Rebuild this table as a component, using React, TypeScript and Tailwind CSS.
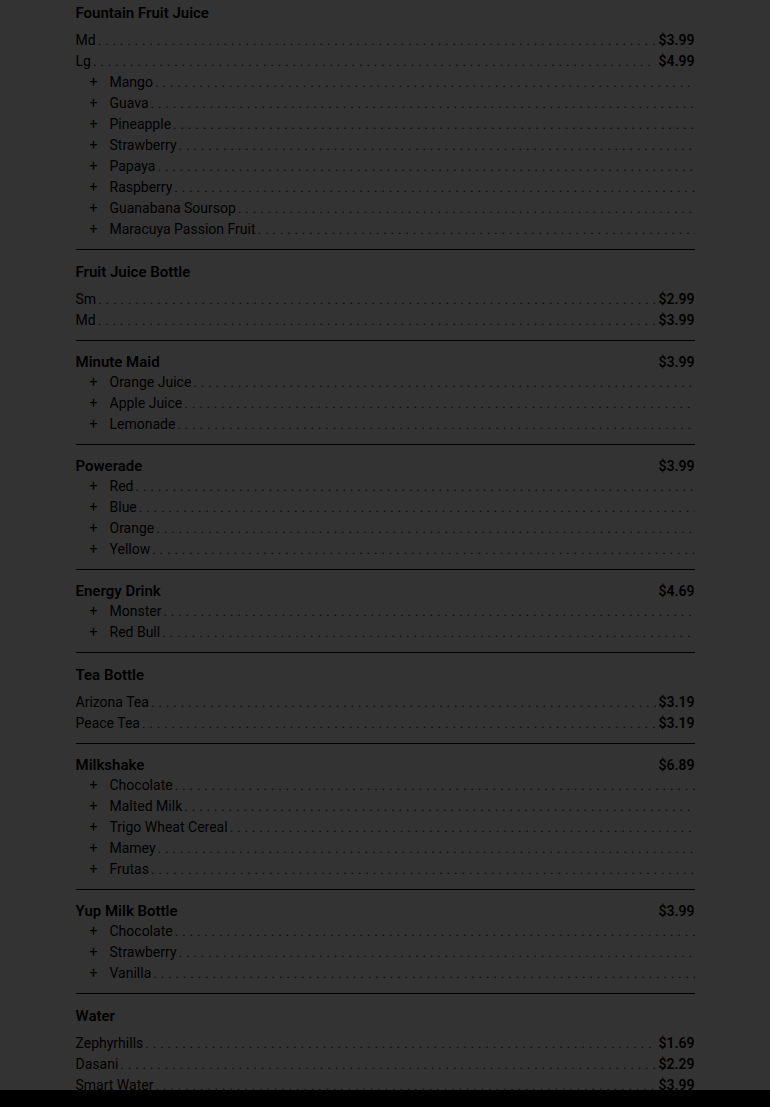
type Row = { name: string; price?: string }
type Section = { title: string; price?: string; rows?: Row[]; subs?: string[] }

const sections: Section[] = [
  {
    title: 'Fountain Fruit Juice',
    rows: [
      { name: 'Md', price: '$3.99' },
      { name: 'Lg', price: '$4.99' },
    ],
    subs: ['Mango', 'Guava', 'Pineapple', 'Strawberry', 'Papaya', 'Raspberry', 'Guanabana Soursop', 'Maracuya Passion Fruit'],
  },
  {
    title: 'Fruit Juice Bottle',
    rows: [
      { name: 'Sm', price: '$2.99' },
      { name: 'Md', price: '$3.99' },
    ],
  },
  { title: 'Minute Maid', price: '$3.99', subs: ['Orange Juice', 'Apple Juice', 'Lemonade'] },
  { title: 'Powerade', price: '$3.99', subs: ['Red', 'Blue', 'Orange', 'Yellow'] },
  { title: 'Energy Drink', price: '$4.69', subs: ['Monster', 'Red Bull'] },
  {
    title: 'Tea Bottle',
    rows: [
      { name: 'Arizona Tea', price: '$3.19' },
      { name: 'Peace Tea', price: '$3.19' },
    ],
  },
  { title: 'Milkshake', price: '$6.89', subs: ['Chocolate', 'Malted Milk', 'Trigo Wheat Cereal', 'Mamey', 'Frutas'] },
  { title: 'Yup Milk Bottle', price: '$3.99', subs: ['Chocolate', 'Strawberry', 'Vanilla'] },
  {
    title: 'Water',
    rows: [
      { name: 'Zephyrhills', price: '$1.69' },
      { name: 'Dasani', price: '$2.29' },
      { name: 'Smart Water', price: '$3.99' },
      { name: 'Fiji', price: '$3.49' },
    ],
  },
]

const DOTS = '.'.repeat(100)

// dot leader between a name and its price
function Leader() {
  return (
    <span className="flex-1 min-w-0 overflow-hidden whitespace-nowrap pl-[2px] tracking-[3.7px] text-gray-700">{DOTS}</span>
  )
}

function PriceRow({ row }: { row: Row }) {
  return (
    <div className="flex items-baseline h-[21px] leading-[21px]">
      <span className="whitespace-nowrap">{row.name}</span>
      <Leader />
      <span className="pl-[3px] font-semibold">{row.price}</span>
    </div>
  )
}

function SubRow({ name }: { name: string }) {
  return (
    <div className="flex items-baseline h-[21px] leading-[21px] pl-[14px]">
      <span className="w-5 shrink-0">+</span>
      <span className="whitespace-nowrap">{name}</span>
      <Leader />
    </div>
  )
}

export default function App() {
  return (
    <div className="min-h-screen bg-white text-[14px] text-black" style={{ fontFamily: 'Roboto, "Liberation Sans", sans-serif' }}>
      <div className="mx-auto max-w-[619px] pt-[3px]">
        {sections.map((s, i) => (
          <div key={i} className={`border-b border-black pb-[9px] ${i > 0 ? 'pt-3' : ''}`}>
            {s.price ? (
              <div className="flex justify-between h-[19px] leading-[19px] font-semibold">
                <span className="text-[15px]">{s.title}</span>
                <span>{s.price}</span>
              </div>
            ) : (
              <div className="h-5 leading-5 text-[15px] font-semibold mb-[7px]">{s.title}</div>
            )}
            {s.rows?.map((r, j) => <PriceRow key={j} row={r} />)}
            {s.subs?.map((n, j) => <SubRow key={j} name={n} />)}
          </div>
        ))}
      </div>

      {/* backdrop */}
      <div className="fixed inset-0 bg-black/80" />
      <div className="fixed bottom-0 left-0 right-0 h-[17px] bg-black" />
    </div>
  )
}
